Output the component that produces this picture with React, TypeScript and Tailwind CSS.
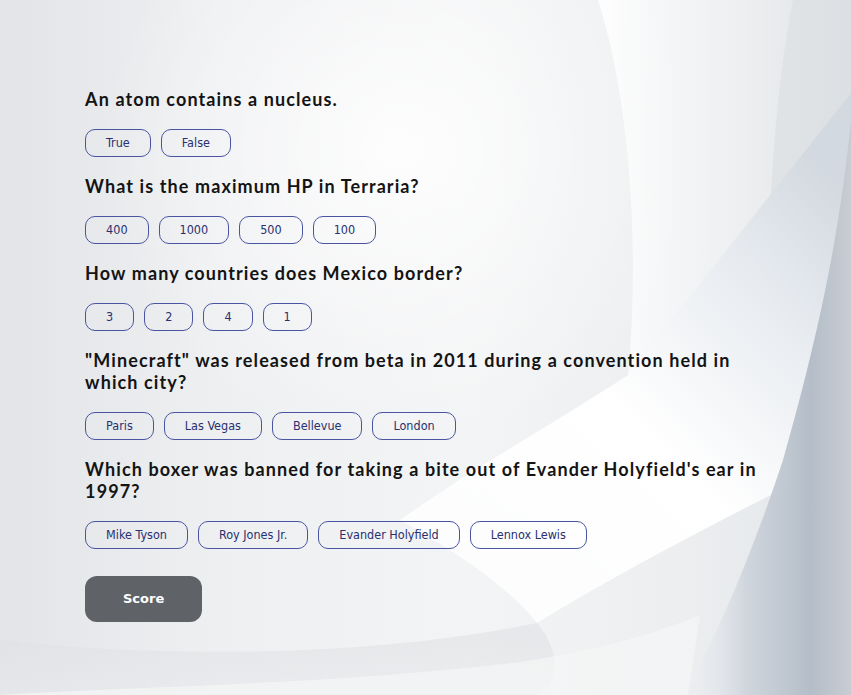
import { useState } from "react"

type Question = {
  text: string
  answers: string[]
}

const questions: Question[] = [
  { text: "An atom contains a nucleus.", answers: ["True", "False"] },
  { text: "What is the maximum HP in Terraria?", answers: ["400", "1000", "500", "100"] },
  { text: "How many countries does Mexico border?", answers: ["3", "2", "4", "1"] },
  {
    text: "\"Minecraft\" was released from beta in 2011 during a convention held in which city?",
    answers: ["Paris", "Las Vegas", "Bellevue", "London"],
  },
  {
    text: "Which boxer was banned for taking a bite out of Evander Holyfield's ear in 1997?",
    answers: ["Mike Tyson", "Roy Jones Jr.", "Evander Holyfield", "Lennox Lewis"],
  },
]

// abstract silver backdrop
function Backdrop() {
  return (
    <svg
      className="absolute inset-0 h-full w-full"
      viewBox="0 0 851 695"
      preserveAspectRatio="none"
      aria-hidden="true"
    >
      <defs>
        <linearGradient id="base" x1="0" y1="0" x2="1" y2="0">
          <stop offset="0" stopColor="#e2e4e7" />
          <stop offset="0.25" stopColor="#eeeff1" />
          <stop offset="0.55" stopColor="#f3f4f5" />
          <stop offset="0.8" stopColor="#eceef0" />
          <stop offset="1" stopColor="#e2e5e8" />
        </linearGradient>
        <radialGradient id="glow" cx="400" cy="150" r="300" gradientUnits="userSpaceOnUse">
          <stop offset="0" stopColor="#ffffff" stopOpacity="0.85" />
          <stop offset="0.6" stopColor="#ffffff" stopOpacity="0.3" />
          <stop offset="1" stopColor="#ffffff" stopOpacity="0" />
        </radialGradient>
        <linearGradient id="lobe" x1="598" y1="0" x2="851" y2="0" gradientUnits="userSpaceOnUse">
          <stop offset="0" stopColor="#ffffff" stopOpacity="0.9" />
          <stop offset="0.45" stopColor="#f4f5f6" stopOpacity="0.6" />
          <stop offset="1" stopColor="#dde0e4" stopOpacity="0.9" />
        </linearGradient>
        <linearGradient id="band" x1="450" y1="600" x2="851" y2="200" gradientUnits="userSpaceOnUse">
          <stop offset="0" stopColor="#ffffff" stopOpacity="0.8" />
          <stop offset="0.45" stopColor="#ffffff" stopOpacity="1" />
          <stop offset="0.8" stopColor="#e6eaef" stopOpacity="1" />
          <stop offset="1" stopColor="#d3d9e0" stopOpacity="1" />
        </linearGradient>
        <linearGradient id="steel" x1="690" y1="0" x2="851" y2="0" gradientUnits="userSpaceOnUse">
          <stop offset="0" stopColor="#e8ebef" stopOpacity="0" />
          <stop offset="0.35" stopColor="#cdd3db" stopOpacity="0.9" />
          <stop offset="0.75" stopColor="#b4bdc8" />
          <stop offset="1" stopColor="#c8cdd3" />
        </linearGradient>
        <linearGradient id="floor" x1="0" y1="640" x2="0" y2="695" gradientUnits="userSpaceOnUse">
          <stop offset="0" stopColor="#dfe1e4" stopOpacity="0.6" />
          <stop offset="1" stopColor="#e6e8eb" stopOpacity="0.6" />
        </linearGradient>
      </defs>
      <rect width="851" height="695" fill="url(#base)" />
      <rect width="851" height="695" fill="url(#glow)" />
      {/* lighter lobe between the two top-right curves */}
      <path d="M598 0 C630 100 640 250 628 375 L851 93 L851 0 Z" fill="url(#lobe)" />
      <path d="M793 0 C776 90 772 170 770 215 L851 93 L851 0 Z" fill="#dcdfe3" opacity="0.7" />
      {/* white swoosh under the diagonal */}
      <path
        d="M851 93 L628 375 C560 420 470 470 400 520 C470 560 510 590 537 623 C640 560 760 500 851 455 Z"
        fill="url(#band)"
      />
      {/* steel edge on the right */}
      <path d="M851 120 C840 230 820 330 783 460 C750 560 715 640 683 695 L851 695 Z" fill="url(#steel)" />
      {/* lower sweep */}
      <path d="M0 640 C180 660 380 655 537 623 C560 650 560 680 540 695 L0 695 Z" fill="url(#floor)" />
      <path d="M0 695 C150 686 340 684 520 662 C600 650 660 632 700 615 L688 695 Z" fill="#f5f6f7" opacity="0.7" />
    </svg>
  )
}

export default function App() {
  const [picked, setPicked] = useState<Record<number, string>>({})

  return (
    <div className="relative min-h-[695px] w-full overflow-hidden">
      <Backdrop />
      <main className="relative px-[10%] pt-[88px] pb-10">
        {questions.map((q, i) => (
          <section key={i} className="mb-[18px]">
            <h2 className="mb-[19px] font-['Lato',sans-serif] text-[18px] font-bold leading-[22px] tracking-[1.1px] text-[#141414]">
              {q.text}
            </h2>
            <div className="flex flex-wrap gap-[10px]">
              {q.answers.map((a) => (
                <button
                  key={a}
                  onClick={() => setPicked({ ...picked, [i]: a })}
                  className={
                    picked[i] === a
                      ? "h-[28px] rounded-[10px] border border-[#4a55a2] bg-[#4a55a2] px-[20px] font-['DejaVu_Sans_Condensed','DejaVu_Sans',sans-serif] text-[12.5px] text-white"
                      : "h-[28px] rounded-[10px] border border-[#4a55a2] bg-transparent px-[20px] font-['DejaVu_Sans_Condensed','DejaVu_Sans',sans-serif] text-[12.5px] text-[#283070]"
                  }
                >
                  {a}
                </button>
              ))}
            </div>
          </section>
        ))}
        <button className="mt-[9px] h-[46px] w-[117px] rounded-[12px] bg-[#5f6368] font-['DejaVu_Sans',sans-serif] text-[13px] font-bold text-white">
          Score
        </button>
      </main>
    </div>
  )
}
